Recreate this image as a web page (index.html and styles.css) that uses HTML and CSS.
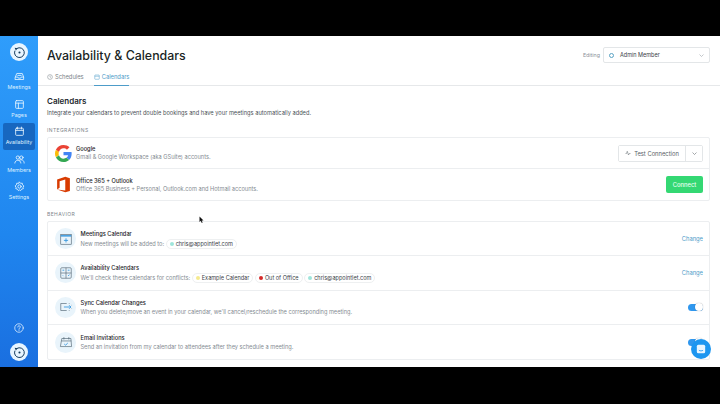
FILE: index.html
```html
<!DOCTYPE html>
<html lang="en">
<head>
  <meta charset="UTF-8" />
  <title>Availability &amp; Calendars</title>
  <link rel="stylesheet" href="styles.css">
</head>
<body>
  <div class="app">
    <nav class="sidebar">
      <div class="logo">
        <svg viewBox="0 0 20 20" width="13" height="13"><path d="M6 3.800a7.500 7.500 0 1 1-3 3.400" class="logo-ring"/><circle cx="10" cy="10" r="1.600" fill="#12395b"/><path d="M2.500 2.500l4.500.800-2.500 3.500z" fill="#12395b"/></svg>
      </div>
      <a class="nav-item">
        <svg viewBox="0 0 20 20"><path d="M2.500 11l2.500-6.500h10l2.500 6.500v4.500h-15z M2.500 11h4.500l1 2h4l1-2h4.500"/><path d="M7 8h6"/></svg>
        <span>Meetings</span>
      </a>
      <a class="nav-item">
        <svg viewBox="0 0 20 20"><rect x="3" y="3" width="14" height="14" rx="1.500"/><path d="M3 7.500h14M8 7.500v9.500"/></svg>
        <span>Pages</span>
      </a>
      <a class="nav-item active">
        <svg viewBox="0 0 20 20"><rect x="3" y="4" width="14" height="13" rx="1.500"/><path d="M3 8h14M6.500 2v3.500M13.500 2v3.500"/></svg>
        <span>Availability</span>
      </a>
      <a class="nav-item">
        <svg viewBox="0 0 20 20"><circle cx="7" cy="6.500" r="3"/><circle cx="13.500" cy="6.500" r="3"/><path d="M1.500 16.500c0-7 11-7 11 0M10 11c4-1.500 8.500 0 8.500 5.500"/></svg>
        <span>Members</span>
      </a>
      <a class="nav-item">
        <svg viewBox="0 0 20 20"><circle cx="10" cy="10" r="3"/><path d="M10 2l2 2.300 3-.3.500 3L18 9l-1.500 2.500.5 2.500-3 .7L12 17.500l-2-1.200-2 1.200-1.800-2.800-3-.7.500-2.500L2 9l2.500-2 .5-3 3 .3z"/></svg>
        <span>Settings</span>
      </a>
      <div class="sidebar-foot">
        <svg class="help" viewBox="0 0 20 20"><circle cx="10" cy="10" r="8.500"/><path d="M7.500 8a2.500 2.500 0 1 1 3.500 2.300c-.7.300-1 .7-1 1.700M10 14v.8"/></svg>
        <div class="logo">
          <svg viewBox="0 0 20 20" width="13" height="13"><path d="M6 3.800a7.500 7.500 0 1 1-3 3.400" class="logo-ring"/><circle cx="10" cy="10" r="1.600" fill="#12395b"/><path d="M2.500 2.500l4.500.8-2.500 3.500z" fill="#12395b"/></svg>
        </div>
      </div>
    </nav>

    <main class="main">
      <header class="top">
        <h1>Availability &amp; Calendars</h1>
        <div class="editing">
          <span class="editing-label">Editing</span>
          <div class="member-select">
            <span class="member-dot"></span>
            <span class="member-name">Admin Member</span>
            <svg class="chev" viewBox="0 0 10 6"><path d="M1 1l4 4 4-4"/></svg>
          </div>
        </div>
      </header>

      <div class="tabs">
        <a class="tab">
          <svg viewBox="0 0 12 12"><circle cx="6" cy="6" r="4.800"/><path d="M6 3.200V6l1.800 1"/></svg>
          Schedules
        </a>
        <a class="tab current">
          <svg viewBox="0 0 12 12"><rect x="1.500" y="2" width="9" height="8.500" rx="1"/><path d="M1.500 4.500h9"/></svg>
          Calendars
        </a>
      </div>

      <section class="content">
        <h2>Calendars</h2>
        <p class="lead">Integrate your calendars to prevent double bookings and have your meetings automatically added.</p>

        <h3 class="group">INTEGRATIONS</h3>
        <div class="card">
          <div class="row row-int">
            <svg class="brand" viewBox="0 0 48 48">
              <path fill="#ea4335" d="M24 9.500c3.900 0 7.100 1.300 9.700 3.800l7.200-7.200C36.500 2 30.800 0 24 0 14.600 0 6.500 5.400 2.600 13.200l8.400 6.500C13 13.600 18 9.500 24 9.500z"/>
              <path fill="#4285f4" d="M47 24.500c0-1.700-.2-3.300-.4-4.500H24v9h13c-.6 3-2.300 5.500-4.800 7.200l7.700 6C44.400 37.900 47 31.800 47 24.500z"/>
              <path fill="#fbbc05" d="M11 28.300c-.5-1.400-.8-2.800-.8-4.300s.3-3 .8-4.300l-8.400-6.500C.9 16.500 0 20.100 0 24s.9 7.500 2.600 10.800z"/>
              <path fill="#34a853" d="M24 48c6.500 0 11.900-2.100 15.900-5.800l-7.700-6c-2.200 1.400-4.900 2.300-8.200 2.300-6 0-11-4.100-13-9.700l-8.400 6.500C6.500 42.600 14.600 48 24 48z"/>
            </svg>
            <div class="row-text">
              <div class="row-title">Google</div>
              <div class="row-sub">Gmail &amp; Google Workspace (aka GSuite) accounts.</div>
            </div>
            <div class="btn-group">
              <button class="btn">
                <svg viewBox="0 0 12 12"><path d="M1 7h2l1.500-4.500L7 10l1.500-3H11"/></svg>
                Test Connection
              </button>
              <button class="btn btn-caret">
                <svg viewBox="0 0 10 6"><path d="M1 1l4 4 4-4"/></svg>
              </button>
            </div>
          </div>
          <div class="row row-int">
            <svg class="brand" viewBox="0 0 48 48">
              <path fill="#d83b01" d="M6 10L29 2l13 4v36l-13 4-23-8 23 3V10L13 15v18l-7 5z"/>
            </svg>
            <div class="row-text">
              <div class="row-title">Office 365 + Outlook</div>
              <div class="row-sub">Office 365 Business + Personal, Outlook.com and Hotmail accounts.</div>
            </div>
            <button class="btn-connect">Connect</button>
          </div>
        </div>

        <h3 class="group group-behavior">BEHAVIOR</h3>
        <div class="card">
          <div class="row row-beh">
            <span class="bubble">
              <svg viewBox="0 0 20 20"><rect x="2.500" y="3.500" width="15" height="14"/><path d="M2.500 5.500h15" class="accent-line"/><path d="M10 9v6M7 12h6" class="accent"/></svg>
            </span>
            <div class="row-text">
              <div class="row-title">Meetings Calendar</div>
              <div class="row-sub">New meetings will be added to:
                <span class="pill"><i class="dot dot-mint"></i>chris@appointlet.com</span>
              </div>
            </div>
            <a class="change">Change</a>
          </div>
          <div class="row row-beh">
            <span class="bubble">
              <svg viewBox="0 0 20 20"><rect x="2.500" y="2.500" width="15" height="15" rx="1.500"/><path d="M10 2.500v15M2.500 10h15"/><path d="M5 6h2.500M12.500 6H15M5.500 13.500l1 1M13 14l2-1.500" class="accent"/></svg>
            </span>
            <div class="row-text">
              <div class="row-title">Availability Calendars</div>
              <div class="row-sub">We'll check these calendars for conflicts:
                <span class="pill"><i class="dot dot-yellow"></i>Example Calendar</span>
                <span class="pill"><i class="dot dot-red"></i>Out of Office</span>
                <span class="pill"><i class="dot dot-mint"></i>chris@appointlet.com</span>
              </div>
            </div>
            <a class="change">Change</a>
          </div>
          <div class="row row-beh">
            <span class="bubble">
              <svg viewBox="0 0 20 20"><path d="M11 5H2.500v10H11M14 5h1M14 15h1M18 7v.5M18 12v.5"/><path d="M7 10h10M14.500 7.500L17 10l-2.500 2.500" class="accent"/></svg>
            </span>
            <div class="row-text">
              <div class="row-title">Sync Calendar Changes</div>
              <div class="row-sub">When you delete/move an event in your calendar, we'll cancel/reschedule the corresponding meeting.</div>
            </div>
            <span class="switch"><i></i></span>
          </div>
          <div class="row row-beh">
            <span class="bubble">
              <svg viewBox="0 0 20 20"><path d="M2 16.500L4 5h13l1 11.500z"/><path d="M3.500 8.500h14M7 3v3.500M14 3v3.500"/><path d="M7.500 13l2 1.500 3-3" class="accent"/></svg>
            </span>
            <div class="row-text">
              <div class="row-title">Email Invitations</div>
              <div class="row-sub">Send an invitation from my calendar to attendees after they schedule a meeting.</div>
            </div>
            <span class="switch"><i></i></span>
          </div>
        </div>
      </section>

      <svg class="cursor" viewBox="0 0 10 14"><path d="M1 0v11l2.600-2.300L5.500 13l1.800-.8-1.900-4.100H9z"/></svg>
      <div class="chat">
        <svg viewBox="0 0 12 12"><rect x="1" y="1" width="10" height="10" rx="1.800"/><path d="M3.500 7.500c1.500 1 3.500 1 5 0" class="chat-smile"/></svg>
      </div>
    </main>
  </div>
</body>
</html>
```

FILE: styles.css
```css
* {
  box-sizing: border-box;
}
body {
  margin: 0;
  height: 404px;
  padding-top: 36px;
  background: #000;
  overflow: hidden;
  font-family: "Inter", "Liberation Sans", sans-serif;
  color: #1d2327;
}
.app {
  display: flex;
  height: 331px;
  background: #fff;
}

/* left rail */
.sidebar {
  width: 38px;
  flex: none;
  display: flex;
  flex-direction: column;
  align-items: center;
  padding-top: 7px;
  background: linear-gradient(180deg, #2f9dfb 0%, #1f86ef 60%, #1a6fe0 100%);
}
.logo {
  width: 18px;
  height: 18px;
  border-radius: 50%;
  background: #e8f5ff;
  display: flex;
  align-items: center;
  justify-content: center;
  flex: none;
}
.logo-ring {
  fill: none;
  stroke: #12395b;
  stroke-width: 1.500;
}
.sidebar > .logo {
  margin-bottom: 6.500px;
}
.nav-item {
  width: 32px;
  height: 27.500px;
  border-radius: 2px;
  display: flex;
  flex-direction: column;
  align-items: center;
  justify-content: center;
  gap: 2px;
  color: #dff0ff;
  font-size: 5.300px;
  line-height: 7px;
}
.nav-item svg,
.help {
  width: 11px;
  height: 11px;
  fill: none;
  stroke: #eaf6ff;
  stroke-width: 1.500;
  stroke-linejoin: round;
  stroke-linecap: round;
}
.nav-item.active {
  background: #1767c0;
}
.sidebar-foot {
  margin-top: auto;
  margin-bottom: 6px;
  display: flex;
  flex-direction: column;
  align-items: center;
  gap: 10px;
}
.help {
  width: 10px;
  height: 10px;
}

/* main column */
.main {
  flex: 1;
  min-width: 0;
  position: relative;
  overflow: hidden;
}
.top {
  height: 37px;
  display: flex;
  align-items: center;
  justify-content: space-between;
  padding: 1px 10px 0 9px;
}
h1 {
  margin: 0;
  font-size: 12.400px;
  font-weight: 500;
  color: #1a1f24;
}
.editing {
  display: flex;
  align-items: center;
  gap: 3px;
}
.editing-label {
  font-size: 5.300px;
  color: #8a9197;
}
.member-select {
  width: 107px;
  height: 16px;
  border: 1px solid #e3e6e8;
  border-radius: 2px;
  display: flex;
  align-items: center;
  padding: 0 5px;
  gap: 6px;
  font-size: 5.500px;
  color: #3a4147;
}
.member-dot {
  width: 5px;
  height: 5px;
  border: 1.500px solid #5aa3c4;
  border-radius: 50%;
}
.member-name {
  flex: 1;
}
.chev,
.btn-caret svg {
  width: 5px;
  height: 3px;
  fill: none;
  stroke: #9aa2a8;
  stroke-width: 1.200;
}

.tabs {
  height: 12px;
  padding-left: 9px;
  display: flex;
  gap: 10px;
  border-bottom: 1px solid #e6e8ea;
  box-sizing: content-box;
}
.tab {
  display: flex;
  align-items: flex-start;
  gap: 2px;
  height: 13px;
  font-size: 5.800px;
  line-height: 8px;
  color: #7b8288;
}
.tab svg {
  width: 6px;
  height: 6px;
  margin-top: 1px;
  fill: none;
  stroke: currentColor;
  stroke-width: 1;
}
.tab.current {
  color: #4d9cc9;
  border-bottom: 1px solid #4d9cc9;
}

.content {
  padding: 10px 10px 0 9px;
}
h2 {
  margin: 0;
  font-size: 8px;
  line-height: 10px;
  font-weight: 600;
  color: #22282d;
}
.lead {
  margin: 2px 0 0;
  font-size: 5.700px;
  line-height: 9px;
  color: #4a5157;
}
.group {
  margin: 10px 0 3px;
  font-size: 5px;
  line-height: 7px;
  font-weight: 400;
  letter-spacing: .4px;
  color: #7e858b;
}
.group-behavior {
  margin-top: 10px;
}
.card {
  border: 1px solid #eceef0;
  border-radius: 2px;
}
.row {
  display: flex;
  align-items: center;
  border-bottom: 1px solid #eceef0;
  padding-right: 6px;
}
.row:last-child {
  border-bottom: 0;
}
.row-int {
  height: 31px;
  padding-left: 7px;
  gap: 4px;
}
.row-beh {
  height: 34.300px;
  padding-left: 7px;
  gap: 4.500px;
}
.brand {
  width: 17px;
  height: 17px;
  flex: none;
}
.row-text {
  flex: 1;
  min-width: 0;
}
.row-title {
  font-size: 5.700px;
  line-height: 9px;
  font-weight: 500;
  color: #1d2327;
}
.row-sub {
  font-size: 5.650px;
  line-height: 9px;
  color: #858c92;
  white-space: nowrap;
}
.row-beh .row-title {
  margin-bottom: 1px;
}
.row-beh .row-text {
  margin-top: 1px;
}
.btn-group {
  display: flex;
  height: 17px;
  border: 1px solid #e3e6e8;
  border-radius: 2px;
}
.btn {
  border: 0;
  background: #fff;
  padding: 0;
  width: 66px;
  display: flex;
  align-items: center;
  justify-content: center;
  gap: 3px;
  font-family: inherit;
  font-size: 5.800px;
  color: #596066;
}
.btn svg {
  width: 6px;
  height: 6px;
  fill: none;
  stroke: #596066;
  stroke-width: 1;
}
.btn-caret {
  width: 17px;
  border-left: 1px solid #e3e6e8;
}
.btn-caret svg {
  width: 5px;
  height: 3px;
  stroke: #4a5157;
}
.btn-connect {
  width: 37px;
  height: 17px;
  border: 0;
  border-radius: 2px;
  background: #34d873;
  color: #e9fff2;
  font-family: inherit;
  font-size: 5.800px;
  font-weight: 500;
  padding: 0;
}
.bubble {
  width: 21px;
  height: 21px;
  flex: none;
  border-radius: 50%;
  background: #e9f4fb;
  display: flex;
  align-items: center;
  justify-content: center;
}
.bubble svg {
  width: 14px;
  height: 14px;
  fill: none;
  stroke: #4c6170;
  stroke-width: .9;
}
.bubble .accent {
  stroke: #2f93dc;
  stroke-width: 1.200;
}
.bubble .accent-line {
  stroke: #2f93dc;
  stroke-width: 2;
}
.pill {
  display: inline-flex;
  align-items: center;
  gap: 2px;
  height: 10px;
  padding: 0 3px;
  border: 1px solid #eef0f1;
  border-radius: 5px;
  font-size: 5.550px;
  color: #3a4147;
  vertical-align: middle;
}
.dot {
  width: 4px;
  height: 4px;
  border-radius: 50%;
}
.dot-mint {
  background: #9fe5db;
}
.dot-yellow {
  background: #f5ea8f;
}
.dot-red {
  background: #d42a2a;
}
.change {
  font-size: 5.800px;
  color: #4d9cc9;
}
.switch {
  width: 15px;
  height: 7px;
  border-radius: 4px;
  background: #2f97ee;
  position: relative;
  flex: none;
}
.switch i {
  position: absolute;
  right: 0;
  top: -0.500px;
  width: 8px;
  height: 8px;
  border-radius: 50%;
  background: #fff;
  box-shadow: 0 0 1px rgba(0,0,0,.4);
}

/* things sitting on top of the page */
.cursor {
  position: absolute;
  left: 161px;
  top: 180px;
  width: 5px;
  height: 8px;
  fill: #111;
}
.chat {
  position: absolute;
  right: 9px;
  bottom: 8px;
  width: 20px;
  height: 20px;
  border-radius: 50%;
  background: #1d96f0;
  display: flex;
  align-items: center;
  justify-content: center;
}
.chat svg {
  width: 10px;
  height: 10px;
  fill: #e8f5ff;
}
.chat-smile {
  fill: none;
  stroke: #1d96f0;
  stroke-width: 1;
}
```
